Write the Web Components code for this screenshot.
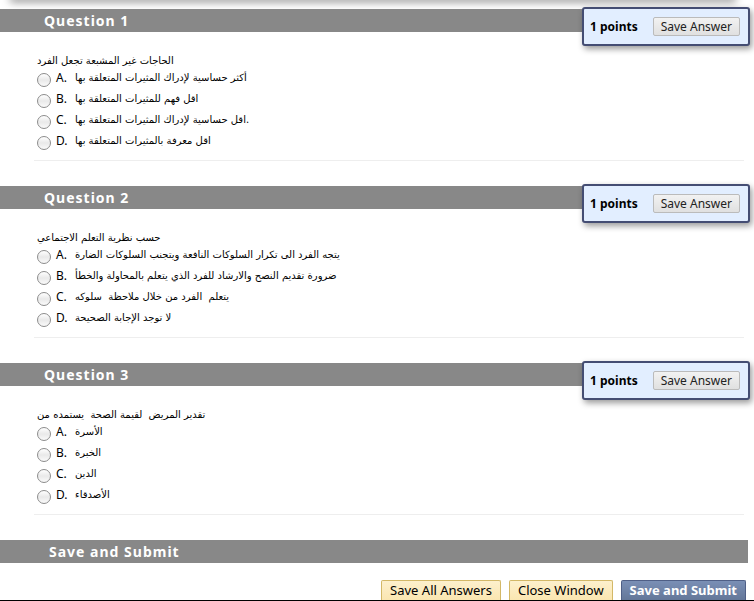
<!DOCTYPE html>
<html lang="en">
<head>
<meta charset="utf-8">
<title>Take Test</title>
<style>
    body {
        margin: 0;
        background: #fff;
        color: #000;
        font-family: "Noto Sans", "DejaVu Sans", sans-serif;
        font-size: 12px;
    }
</style>
</head>
<body>
<test-page></test-page>

<script>
const NB = '\u00a0';

const QUESTIONS = [
    {
        stem: 'الحاجات غير المشبعة تجعل الفرد',
        answers: [
            'أكثر حساسية لإدراك المثيرات المتعلقة بها',
            'اقل فهم للمثيرات المتعلقة بها',
            'اقل حساسية لإدراك المثيرات المتعلقة بها.',
            'اقل معرفة بالمثيرات المتعلقة بها'
        ]
    },
    {
        stem: 'حسب نظرية التعلم الاجتماعي',
        answers: [
            'يتجه الفرد الى تكرار السلوكات النافعة ويتجنب السلوكات الضارة',
            'ضرورة تقديم النصح والارشاد للفرد الذي يتعلم بالمحاولة والخطأ',
            `يتعلم ${NB}الفرد من خلال ملاحظة ${NB}سلوكه`,
            'لا توجد الإجابة الصحيحة'
        ]
    },
    {
        stem: `تقدير المريض ${NB}لقيمة الصحة ${NB}يستمده من`,
        answers: ['الأسرة', 'الخبرة', 'الدين', 'الأصدقاء']
    }
];

class SectionBar extends HTMLElement {
    constructor() {
        super();
        this.attachShadow({ mode: 'open' });
        this.shadowRoot.innerHTML = `
            <style>
                :host {
                    display: block;
                    position: relative;
                    margin-right: 6px;
                    padding-left: var(--bar-indent, 44px);
                    background: #888;
                    color: #fff;
                }
                h2 {
                    margin: 0;
                    font: bold 14px/23px "Noto Sans", "DejaVu Sans", sans-serif;
                    letter-spacing: 1px;
                }
                ::slotted(points-box) {
                    position: absolute;
                    top: -2px;
                    right: -2px;
                }
            </style>
            <h2><slot></slot></h2>
            <slot name="badge"></slot>
        `;
    }
}

class PointsBox extends HTMLElement {
    constructor() {
        super();
        this.attachShadow({ mode: 'open' });
        this.shadowRoot.innerHTML = `
            <style>
                :host {
                    display: flex;
                    align-items: center;
                    gap: 15px;
                    padding: 8px 8px 8px 6px;
                    border: 2px solid #444d73;
                    border-radius: 3px;
                    background: #e2eeff;
                    color: #000;
                    box-shadow: 2px 3px 6px rgba(0,0,0,0.4);
                }
                strong {
                    line-height: 18px;
                }
            </style>
            <strong><slot></slot></strong>
            <push-button>Save Answer</push-button>
        `;
    }
}

class PushButton extends HTMLElement {
    constructor() {
        super();
        this.attachShadow({ mode: 'open' });
        this.shadowRoot.innerHTML = `
            <style>
                :host {
                    display: block;
                }
                button {
                    display: block;
                    box-sizing: border-box;
                    height: 19px;
                    margin: 0;
                    padding: 0 7px;
                    border: 1px solid #bbb;
                    border-radius: 2px;
                    background: linear-gradient(#f2f2f2, #e0e0e0);
                    color: #222;
                    font: 12px/17px "Noto Sans", "DejaVu Sans", sans-serif;
                    white-space: nowrap;
                    cursor: pointer;
                }
                :host([kind]) button {
                    height: 20px;
                    padding: 0 8px;
                    border-color: #d3b867;
                    border-bottom: 0;
                    border-radius: 2px 2px 0 0;
                    background: linear-gradient(#fdf0cd, #fae6b0);
                    color: #000;
                    font-size: 13px;
                    line-height: 19px;
                }
                :host([kind=primary]) button {
                    border-color: #4f5f86;
                    background: linear-gradient(#7a8fb5, #647799);
                    color: #fff;
                    font-weight: bold;
                }
            </style>
            <button type="button"><slot></slot></button>
        `;
    }
}

class TestQuestion extends HTMLElement {
    constructor() {
        super();
        this.attachShadow({ mode: 'open' });
        this.shadowRoot.innerHTML = `
            <style>
                :host {
                    display: block;
                    margin-bottom: 25px;
                }
                fieldset {
                    min-width: 0;
                    margin: 0 10px 0 34px;
                    padding: 21px 0 8px 3px;
                    border: 0;
                    border-bottom: 1px solid #eee;
                }
                .stem {
                    margin: 0;
                    line-height: 15px;
                }
                .answers {
                    display: grid;
                    grid-auto-rows: 21px;
                }
                .answer {
                    display: flex;
                    align-items: center;
                }
                input {
                    flex: none;
                    appearance: none;
                    width: 14px;
                    height: 14px;
                    margin: 3px 5px 0 0;
                    border: 1px solid #8c8c8c;
                    border-radius: 50%;
                    background: linear-gradient(#fff, #e9e9e9 50%, #fafafa);
                }
                input:checked {
                    background: radial-gradient(#333 3px, #eee 4px);
                }
                label {
                    display: flex;
                    padding-bottom: 2px;
                    line-height: 18px;
                    white-space: nowrap;
                }
                .letter {
                    width: 19px;
                }
                .text, .stem {
                    font-family: var(--arabic);
                    font-size: 10px;
                }
            </style>
            <section-bar><span class="title"></span><points-box slot="badge">1 points</points-box></section-bar>
            <fieldset>
                <p class="stem"></p>
                <div class="answers"></div>
            </fieldset>
        `;
    }

    set question({ number, stem, answers }) {
        this.shadowRoot.querySelector('.title').textContent = `Question ${number}`;
        this.shadowRoot.querySelector('.stem').textContent = stem;
        this.shadowRoot.querySelector('fieldset').setAttribute('aria-label', `Question ${number}`);
        this.shadowRoot.querySelector('.answers').innerHTML = answers.map((text, i) => `
            <div class="answer">
                <input type="radio" name="q${number}" id="a${i}">
                <label for="a${i}"><span class="letter">${'ABCD'[i]}.</span><span class="text">${text}</span></label>
            </div>
        `).join('');
    }
}

class TestPage extends HTMLElement {
    constructor() {
        super();
        this.attachShadow({ mode: 'open' });
        this.shadowRoot.innerHTML = `
            <style>
                :host {
                    display: block;
                    --arabic: "DejaVu Sans", sans-serif;
                }
                /* shadow of the panel that is scrolled off above */
                .edge {
                    height: 9px;
                    overflow: hidden;
                }
                .edge div {
                    height: 0;
                    margin: 0 20px 0 12px;
                    box-shadow: 0 -1px 8px 2px rgba(0,0,0,0.7);
                }
                .submit {
                    --bar-indent: 49px;
                }
                .actions {
                    display: flex;
                    justify-content: flex-end;
                    gap: 8px;
                    padding: 17px 8px 0 0;
                    border-bottom: 1px solid #000;
                }
            </style>
            <div class="edge"><div></div></div>
            <main></main>
            <section-bar class="submit">Save and Submit</section-bar>
            <div class="actions">
                <push-button kind="secondary">Save All Answers</push-button>
                <push-button kind="secondary">Close Window</push-button>
                <push-button kind="primary">Save and Submit</push-button>
            </div>
        `;
    }

    connectedCallback() {
        const main = this.shadowRoot.querySelector('main');
        QUESTIONS.forEach((question, i) => {
            const el = document.createElement('test-question');
            el.question = { number: i + 1, ...question };
            main.appendChild(el);
        });
    }
}

customElements.define('push-button', PushButton);
customElements.define('points-box', PointsBox);
customElements.define('section-bar', SectionBar);
customElements.define('test-question', TestQuestion);
customElements.define('test-page', TestPage);
</script>
</body>
</html>
